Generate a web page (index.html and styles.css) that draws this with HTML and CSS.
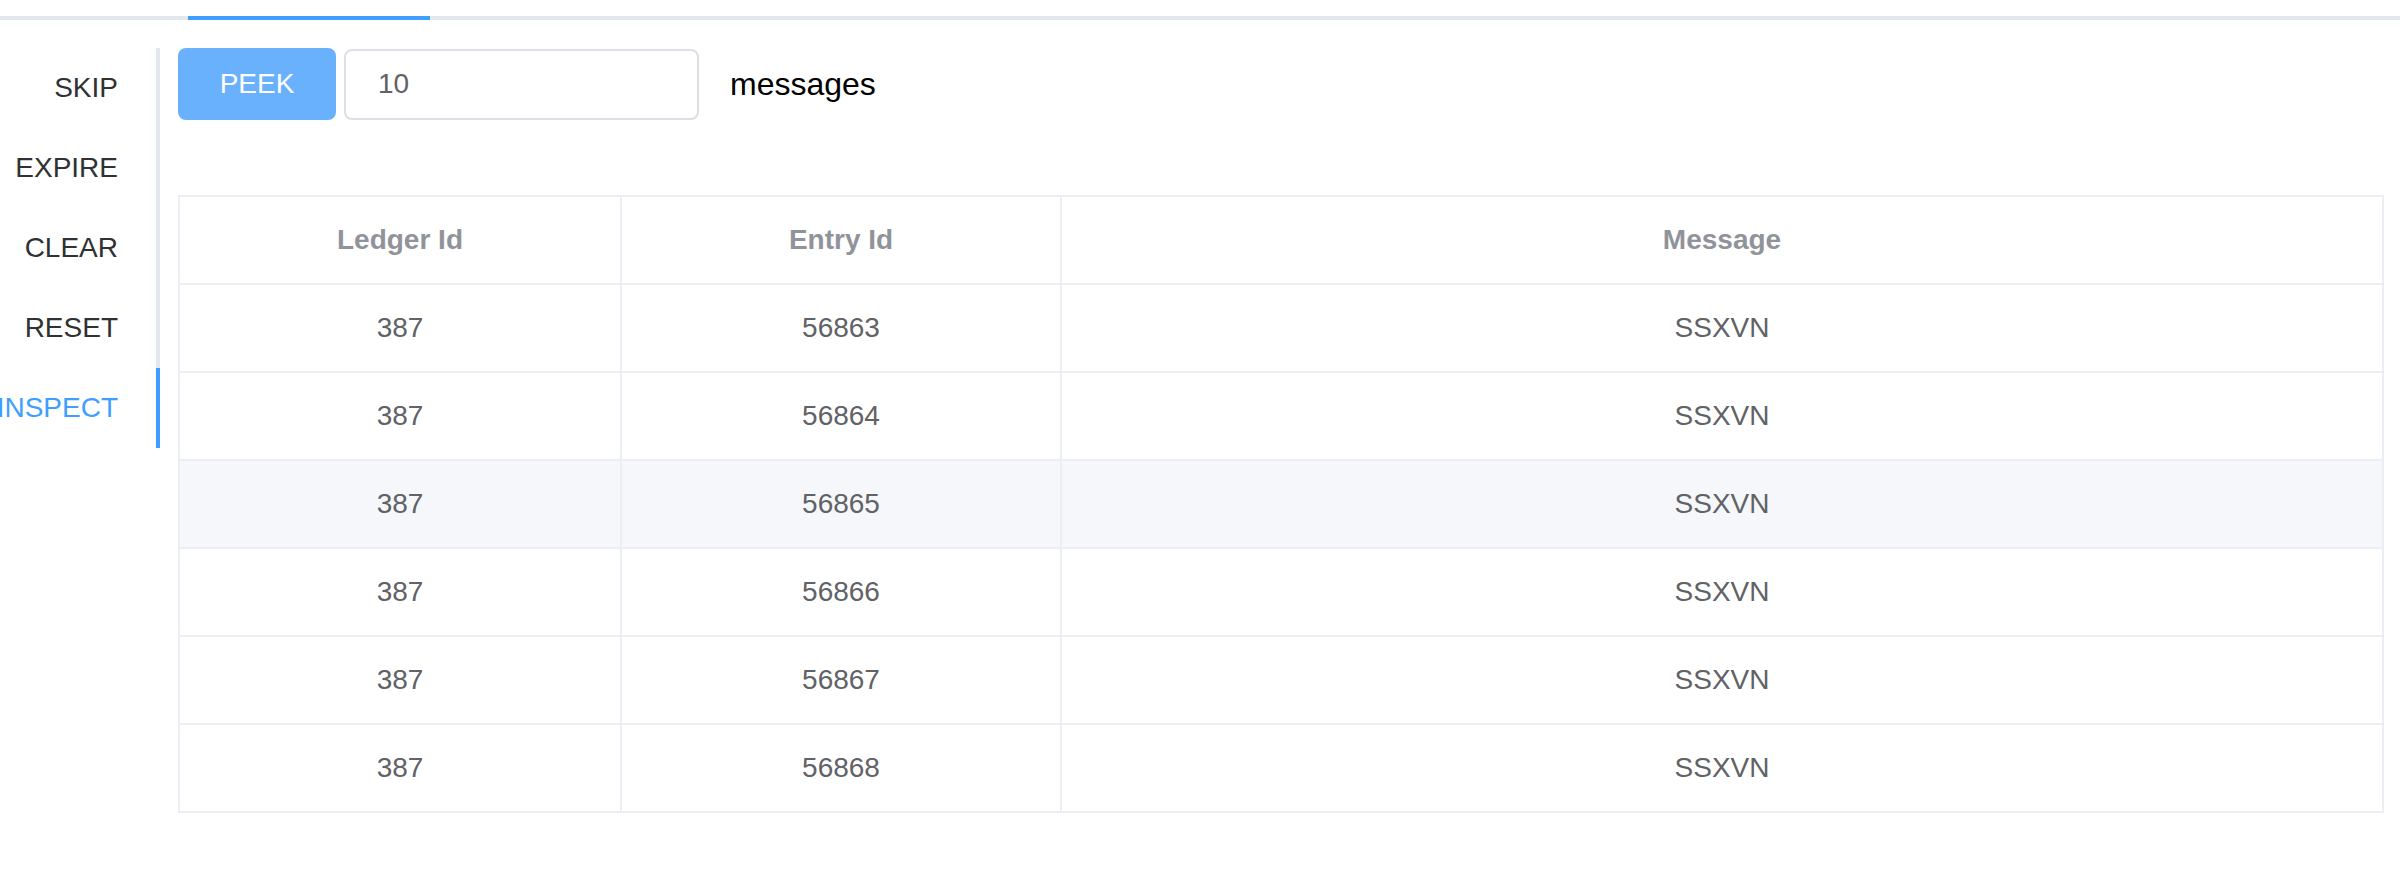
FILE: index.html
```html
<!DOCTYPE html>
<html>
<head>
<meta charset="utf-8">
<link rel="stylesheet" href="styles.css">
</head>
<body>
<div class="topnav"><div class="topnav-bar"></div></div>
<div class="main">
  <div class="side">
    <div class="tab">SKIP</div>
    <div class="tab">EXPIRE</div>
    <div class="tab">CLEAR</div>
    <div class="tab">RESET</div>
    <div class="tab active">INSPECT</div>
  </div>
  <div class="content">
    <div class="toolbar">
      <button class="btn">PEEK</button>
      <input class="num" type="text" value="10">
      <span class="label">messages</span>
    </div>
    <table class="grid">
      <colgroup><col class="c1"><col class="c2"><col></colgroup>
      <thead>
        <tr><th>Ledger Id</th><th>Entry Id</th><th>Message</th></tr>
      </thead>
      <tbody>
        <tr><td>387</td><td>56863</td><td>SSXVN</td></tr>
        <tr><td>387</td><td>56864</td><td>SSXVN</td></tr>
        <tr class="hover"><td>387</td><td>56865</td><td>SSXVN</td></tr>
        <tr><td>387</td><td>56866</td><td>SSXVN</td></tr>
        <tr><td>387</td><td>56867</td><td>SSXVN</td></tr>
        <tr><td>387</td><td>56868</td><td>SSXVN</td></tr>
      </tbody>
    </table>
  </div>
</div>
</body>
</html>
```
FILE: styles.css
```css
html, body {
  margin: 0;
  padding: 0;
  background: #fff;
  font-family: "Liberation Sans", Arial, Helvetica, sans-serif;
}
.topnav {
  width: 2400px;
  height: 16px;
  border-bottom: 4px solid #e4e7ed;
  display: flex;
  align-items: flex-end;
}
.topnav-bar {
  margin-left: 188px;
  width: 242px;
  height: 4px;
  margin-bottom: -4px;
  background: #409eff;
}
.main {
  display: flex;
  align-items: flex-start;
  margin-top: 28px;
}
.side {
  width: 160px;
  flex-shrink: 0;
  display: flex;
  flex-direction: column;
}
.tab {
  box-sizing: border-box;
  height: 80px;
  display: flex;
  align-items: center;
  justify-content: flex-end;
  padding-right: 38px;
  border-right: 4px solid #e4e7ed;
  font-size: 28px;
  color: #303133;
  white-space: nowrap;
}
.tab.active {
  color: #409eff;
  border-right-color: #409eff;
}
.content {
  margin-left: 18px;
  width: 2206px;
}
.toolbar {
  display: flex;
  align-items: center;
  height: 72px;
}
.btn {
  box-sizing: border-box;
  width: 158px;
  height: 72px;
  border: none;
  border-radius: 8px;
  background: #69b1fd;
  color: #fff;
  font-family: inherit;
  font-size: 28px;
  padding: 0;
}
.num {
  box-sizing: border-box;
  margin-left: 8px;
  width: 355px;
  height: 71px;
  border: 2px solid #dcdfe6;
  border-radius: 8px;
  padding: 0 0 0 32px;
  font-family: inherit;
  font-size: 28px;
  color: #606266;
  outline: none;
}
.label {
  margin-left: 31px;
  font-size: 32px;
  color: #000;
}
.grid {
  margin-top: 75px;
  width: 2206px;
  table-layout: fixed;
  border-collapse: separate;
  border-spacing: 0;
  border-top: 2px solid #ebeef5;
  border-left: 2px solid #ebeef5;
}
.c1 { width: 442px; }
.c2 { width: 440px; }
.grid th, .grid td {
  padding: 0;
  height: 86px;
  line-height: 86px;
  text-align: center;
  border-right: 2px solid #ebeef5;
  border-bottom: 2px solid #ebeef5;
  font-size: 28px;
}
.grid th {
  color: #909399;
  font-weight: bold;
}
.grid td {
  color: #606266;
}
.grid tr.hover td {
  background: #f5f7fa;
}
```
